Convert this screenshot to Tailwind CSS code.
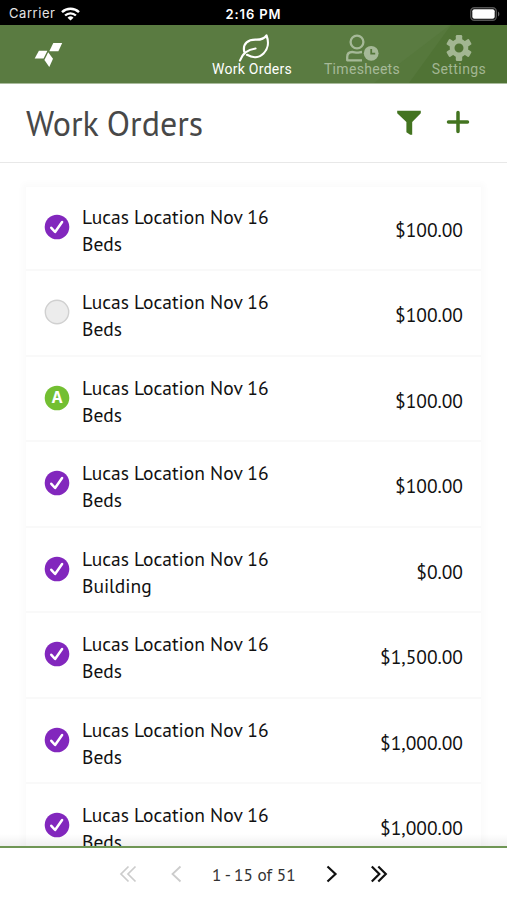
<!DOCTYPE html>
<html lang="en">
<head>
  <meta charset="UTF-8" />
  <meta name="viewport" content="width=device-width, initial-scale=1.0" />
  <title>Work Orders</title>
  <script src="https://cdn.jsdelivr.net/npm/@tailwindcss/browser@4"></script>
</head>
<body class="bg-white h-[900px] w-[507px] overflow-hidden flex flex-col font-['PT_Sans','Noto_Sans',sans-serif] text-[#111]">

<!-- Status bar -->
<div class="h-[25px] shrink-0 bg-black text-white flex items-center justify-between pl-[9px] pr-[7px] pt-[2px] relative font-['Inter',sans-serif]">
  <div class="flex items-center gap-[6px]">
    <span class="text-[13px] leading-none tracking-[0.55px] text-[#e4e4e4]">Carrier</span>
    <svg width="19" height="14" viewBox="0 0 19 14" fill="none" stroke="#fff" stroke-width="2.4">
      <path d="M1 5.2a12.3 12.3 0 0 1 17 0" />
      <path d="M4.1 8.5a7.8 7.8 0 0 1 10.8 0" />
      <path d="M9.5 13.6 6.5 10.7a4.4 4.4 0 0 1 6 0z" fill="#fff" stroke="none" />
    </svg>
  </div>
  <span class="absolute inset-x-0 top-[7px] text-center text-[13px] leading-[14px] font-semibold tracking-[0.9px]">2:16 PM</span>
  <svg width="30" height="14" viewBox="0 0 30 14">
    <rect x=".75" y=".75" width="25.5" height="12.5" rx="3.5" fill="none" stroke="#555" stroke-width="1.3" />
    <rect x="2.3" y="2.3" width="22.4" height="9.4" rx="2" fill="#fff" />
    <path d="M28 4.5c1.8.7 1.8 4.3 0 5z" fill="#666" />
  </svg>
</div>

<!-- Top navigation -->
<nav class="h-[59px] shrink-0 relative bg-[#5a7b41] border-b border-[#a9bb9c] font-['Roboto',sans-serif] text-[14px] leading-[16px]">
  <svg class="absolute inset-0" width="507" height="58" viewBox="0 0 507 58">
    <path d="M450 0 374 58h133V0z" fill="#56783c" />
    <path d="M451 0 409 58h98V0z" fill="#507335" />
  </svg>
  <div class="relative flex h-full pl-[34px]">
    <svg class="mt-[17px] mr-[149px]" width="29" height="26" viewBox="0 0 29 26" fill="#fff">
      <path d="M19.3 1h8.9l-3.8 8.2h-9.1z" />
      <path d="M4.9 8.8h8.5L9.6 16.4H.7z" />
      <path d="M14.2 10.3 19 16.7 15.3 25 10.4 18z" />
    </svg>
    <a href="#" class="w-[80px] flex flex-col items-center text-white pt-[9px]">
      <svg class="ml-1" width="33" height="28" viewBox="0 0 33 28" fill="none" stroke="#fff" stroke-width="2.2" stroke-linecap="round" stroke-linejoin="round">
        <path d="M2 26.5c2-5.8 6.3-10.8 15.5-12" />
        <path d="M6.2 17.5C4.5 9 10.5 5.5 18 5.7c5 .1 8.3-1.1 10.5-4.2 2.5 6.5 1.6 13.6-3 18-4.3 4.3-10.7 4.8-16.5 1.3" />
      </svg>
      <span class="whitespace-nowrap -mt-px tracking-[0.28px]">Work Orders</span>
    </a>
    <a href="#" class="w-[78px] ml-[31px] flex flex-col items-center text-[#a6b998] pt-[9px]">
      <svg width="34" height="28" viewBox="0 0 34 28">
        <g fill="none" stroke="currentColor" stroke-width="2.3" stroke-linejoin="round">
          <circle cx="12" cy="8" r="6.4" />
          <path d="M17 26.3H2.2V23c0-3.5 2-5 5-5 2 0 3 .7 5.1.7 1.6 0 2.8-.6 4.7-.7" />
        </g>
        <circle cx="26.2" cy="19.3" r="7.4" fill="currentColor" />
        <path d="M26.2 15v4.7h4" fill="none" stroke="#55773b" stroke-width="1.8" />
      </svg>
      <span class="whitespace-nowrap -mt-px tracking-[0.3px]">Timesheets</span>
    </a>
    <a href="#" class="w-[56px] ml-[30px] flex flex-col items-center text-[#a2b692] pt-[9px]">
      <svg width="28" height="28" viewBox="0 0 28 28" fill="currentColor">
        <g transform="translate(14 14)">
          <path fill-rule="evenodd" d="M0-9.3a9.3 9.3 0 1 0 0 18.6a9.3 9.3 0 1 0 0-18.6zM0-4.5a4.5 4.5 0 1 1 0 9a4.5 4.5 0 1 1 0-9z" />
          <rect x="-3.2" y="-13" width="6.4" height="5.5" rx="1.2" />
          <rect x="-3.2" y="-13" width="6.4" height="5.5" rx="1.2" transform="rotate(60)" />
          <rect x="-3.2" y="-13" width="6.4" height="5.5" rx="1.2" transform="rotate(120)" />
          <rect x="-3.2" y="-13" width="6.4" height="5.5" rx="1.2" transform="rotate(180)" />
          <rect x="-3.2" y="-13" width="6.4" height="5.5" rx="1.2" transform="rotate(240)" />
          <rect x="-3.2" y="-13" width="6.4" height="5.5" rx="1.2" transform="rotate(300)" />
        </g>
      </svg>
      <span class="whitespace-nowrap -mt-px tracking-[0.4px]">Settings</span>
    </a>
  </div>
</nav>

<!-- Page title -->
<header class="h-[79px] shrink-0 flex items-center border-b border-[#e8e8e8] pl-[26px] pr-[37px]">
  <h1 class="text-[34px] leading-[40px] text-[#484848] grow whitespace-nowrap">Work Orders</h1>
  <svg class="mr-[24px]" width="26" height="26" viewBox="0 0 26 26" fill="#437420">
    <path d="M1.2.8h23.6v2.5L16.2 12.1v12.7l-2 0-3.8-2.5V12.1L1.2 3.3z" />
  </svg>
  <svg class="-mt-[2px]" width="24" height="24" viewBox="0 0 24 24" stroke="#437420" stroke-width="3.5" stroke-linecap="round">
    <path d="M12 2.5v19M2.5 12h19" />
  </svg>
</header>

<!-- Work order list -->
<main class="grow min-h-0 overflow-hidden px-[26px] pt-[24px] relative">
  <ul id="orders" class="shadow-[0_0_6px_4px_rgba(0,0,0,0.02)]"></ul>
  <div class="absolute inset-x-0 bottom-0 h-[12px] bg-linear-to-b from-transparent to-black/6"></div>
</main>

<!-- Pager -->
<footer class="h-[54px] shrink-0 border-t-2 border-[#6f9655] flex items-center pl-[119px]">
  <svg width="18" height="18" viewBox="0 0 18 18" fill="none" stroke="#ccc" stroke-width="1.7">
    <path d="M9.5 1.5 2 9l7.5 7.5M16.5 1.5 9 9l7.5 7.5" />
  </svg>
  <svg class="ml-[32px]" width="14" height="18" viewBox="0 0 14 18" fill="none" stroke="#ccc" stroke-width="1.8">
    <path d="M11.5 1.5 3.5 9l8 7.5" />
  </svg>
  <span class="ml-[29px] w-[84px] whitespace-nowrap text-[17.3px] leading-[24px] text-[#333] pt-px">1 - 15 of 51</span>
  <svg class="ml-[29px]" width="14" height="18" viewBox="0 0 14 18" fill="none" stroke="#111" stroke-width="2.2">
    <path d="M2.5 1.5 10.5 9l-8 7.5" />
  </svg>
  <svg class="ml-[31px]" width="18" height="18" viewBox="0 0 18 18" fill="none" stroke="#111" stroke-width="2.2">
    <path d="M1.8 1.5 9.3 9l-7.5 7.5M8.3 1.5 15.8 9l-7.5 7.5" />
  </svg>
</footer>

<script>
  const icons = {
    done: '<circle cx="13" cy="13" r="12.3" fill="#8227bd" /><path d="M7.3 13.8l3.8 4.2 7-10" fill="none" stroke="#fff" stroke-width="2.5" stroke-linecap="round" stroke-linejoin="round" />',
    open: '<circle cx="13" cy="13" r="11.7" fill="#ececec" stroke="#d0d0d0" stroke-width="1.4" />',
    approved: '<circle cx="13" cy="13" r="12.3" fill="#73bf32" /><text x="13" y="18.3" text-anchor="middle" font-family="Noto Sans, sans-serif" font-weight="700" font-size="15.5" fill="#fff">A</text>'
  };

  const orders = [
    ['done', 'Beds', '$100.00'],
    ['open', 'Beds', '$100.00'],
    ['approved', 'Beds', '$100.00'],
    ['done', 'Beds', '$100.00'],
    ['done', 'Building', '$0.00'],
    ['done', 'Beds', '$1,500.00'],
    ['done', 'Beds', '$1,000.00'],
    ['done', 'Beds', '$1,000.00']
  ];

  document.getElementById('orders').innerHTML = orders.map(([status, type, price]) => `
    <li class="h-[85.5px] first:h-[84px] bg-white flex items-center border-b-2 border-[#f9f9f9] pl-[18px] pr-[18px] pt-[5px] first:pt-[4px]">
      <svg class="-mt-[6px] mr-[12px] shrink-0" width="26" height="26" viewBox="0 0 26 26">${icons[status]}</svg>
      <div class="grow text-[19.5px] leading-[27px]">
        <p class="whitespace-nowrap">Lucas Location Nov 16</p>
        <p>${type}</p>
      </div>
      <span class="text-[19.5px] leading-[27px] -mt-px">${price}</span>
    </li>`).join('');
</script>
</body>
</html>
